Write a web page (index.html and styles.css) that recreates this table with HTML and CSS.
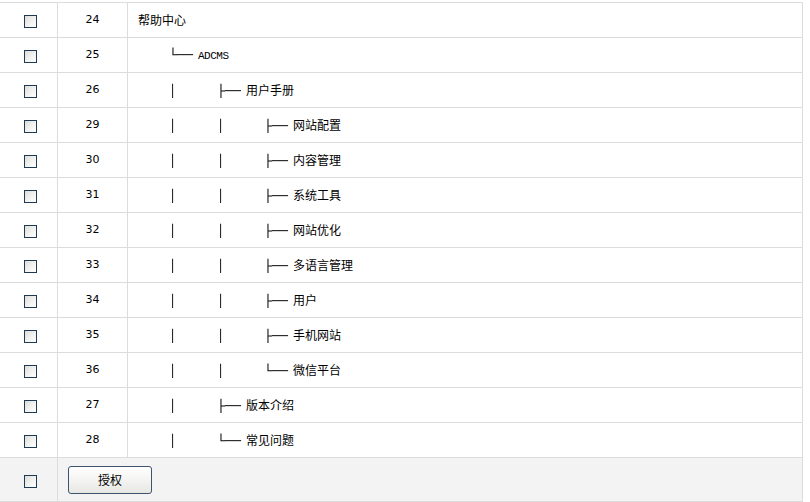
FILE: index.html
```html
<!DOCTYPE html>
<html>
<head>
<meta charset="utf-8">
<link rel="stylesheet" href="styles.css">
</head>
<body>
<table class="list">
  <colgroup><col class="c-check"><col class="c-id"><col class="c-name"></colgroup>
  <tbody>
    <tr><td class="chk"><input type="checkbox"></td><td class="id">24</td><td class="name">帮助中心</td></tr>
    <tr><td class="chk"><input type="checkbox"></td><td class="id">25</td><td class="name"><span class="ind0"></span><span class="br">└──</span><span class="en">ADCMS</span></td></tr>
    <tr><td class="chk"><input type="checkbox"></td><td class="id">26</td><td class="name"><span class="ind0"></span><span class="pipe">│</span><span class="br">├──</span>用户手册</td></tr>
    <tr><td class="chk"><input type="checkbox"></td><td class="id">29</td><td class="name"><span class="ind0"></span><span class="pipe">│</span><span class="pipe pipe2">│</span><span class="br">├──</span>网站配置</td></tr>
    <tr><td class="chk"><input type="checkbox"></td><td class="id">30</td><td class="name"><span class="ind0"></span><span class="pipe">│</span><span class="pipe pipe2">│</span><span class="br">├──</span>内容管理</td></tr>
    <tr><td class="chk"><input type="checkbox"></td><td class="id">31</td><td class="name"><span class="ind0"></span><span class="pipe">│</span><span class="pipe pipe2">│</span><span class="br">├──</span>系统工具</td></tr>
    <tr><td class="chk"><input type="checkbox"></td><td class="id">32</td><td class="name"><span class="ind0"></span><span class="pipe">│</span><span class="pipe pipe2">│</span><span class="br">├──</span>网站优化</td></tr>
    <tr><td class="chk"><input type="checkbox"></td><td class="id">33</td><td class="name"><span class="ind0"></span><span class="pipe">│</span><span class="pipe pipe2">│</span><span class="br">├──</span>多语言管理</td></tr>
    <tr><td class="chk"><input type="checkbox"></td><td class="id">34</td><td class="name"><span class="ind0"></span><span class="pipe">│</span><span class="pipe pipe2">│</span><span class="br">├──</span>用户</td></tr>
    <tr><td class="chk"><input type="checkbox"></td><td class="id">35</td><td class="name"><span class="ind0"></span><span class="pipe">│</span><span class="pipe pipe2">│</span><span class="br">├──</span>手机网站</td></tr>
    <tr><td class="chk"><input type="checkbox"></td><td class="id">36</td><td class="name"><span class="ind0"></span><span class="pipe">│</span><span class="pipe pipe2">│</span><span class="br">└──</span>微信平台</td></tr>
    <tr><td class="chk"><input type="checkbox"></td><td class="id">27</td><td class="name"><span class="ind0"></span><span class="pipe">│</span><span class="br">├──</span>版本介绍</td></tr>
    <tr><td class="chk"><input type="checkbox"></td><td class="id">28</td><td class="name"><span class="ind0"></span><span class="pipe">│</span><span class="br">└──</span>常见问题</td></tr>
    <tr class="foot"><td class="chk"><input type="checkbox"></td><td class="actions" colspan="2"><button class="btn" type="button">授权</button></td></tr>
  </tbody>
</table>
</body>
</html>
```
FILE: styles.css
```css
html, body {
  margin: 0;
  padding: 0;
  background: #fff;
}
body {
  padding-top: 2px;
  font-family: "Noto Sans CJK SC", "DejaVu Sans", sans-serif;
  font-size: 12px;
  color: #000;
}
.list {
  border-collapse: collapse;
  table-layout: fixed;
  width: 804px;
  margin-left: -1px;
}
.c-check { width: 58px; }
.c-id { width: 70px; }
.c-name { width: auto; }
.list td {
  border: 1px solid #dcdcdc;
  height: 34px;
  padding: 0;
  vertical-align: middle;
  line-height: 16px;
}
.list td.chk {
  text-align: center;
  padding-left: 4px;
}
.list td.id {
  text-align: center;
  font-family: "DejaVu Sans", sans-serif;
  font-size: 11px;
}
.list td.name {
  padding-left: 10px;
  white-space: nowrap;
}
.ind0 {
  display: inline-block;
  width: 31px;
}
.pipe {
  display: inline-block;
  width: 48px;
  font-family: "DejaVu Sans", sans-serif;
  color: #000;
  will-change: transform;
}
.pipe2 { width: 47px; }
.br {
  display: inline-block;
  width: 29px;
  font-family: "DejaVu Sans Mono", monospace;
  color: #000;
  transform: scaleX(1.1);
  transform-origin: left center;
  will-change: transform;
}
.en {
  font-family: "Liberation Mono", monospace;
  font-size: 11px;
  letter-spacing: -0.5px;
}
input[type="checkbox"] {
  -webkit-appearance: none;
  appearance: none;
  width: 13px;
  height: 13px;
  margin: 0;
  border: 1px solid #1e3a57;
  background: linear-gradient(135deg, #dcdcd8 0%, #f4f4f2 60%, #ffffff 100%);
  vertical-align: middle;
  display: inline-block;
}
.foot td {
  background: #f3f3f3;
  height: 43px;
}
.foot td.actions {
  padding-left: 10px;
}
.btn {
  width: 84px;
  height: 28px;
  border: 1px solid #3c546e;
  border-radius: 3px;
  background: linear-gradient(#ffffff, #f4f4f2 50%, #e6e6e2);
  font-family: "Noto Sans CJK SC", sans-serif;
  font-size: 12px;
  color: #000;
  padding: 0;
  cursor: pointer;
}
```
